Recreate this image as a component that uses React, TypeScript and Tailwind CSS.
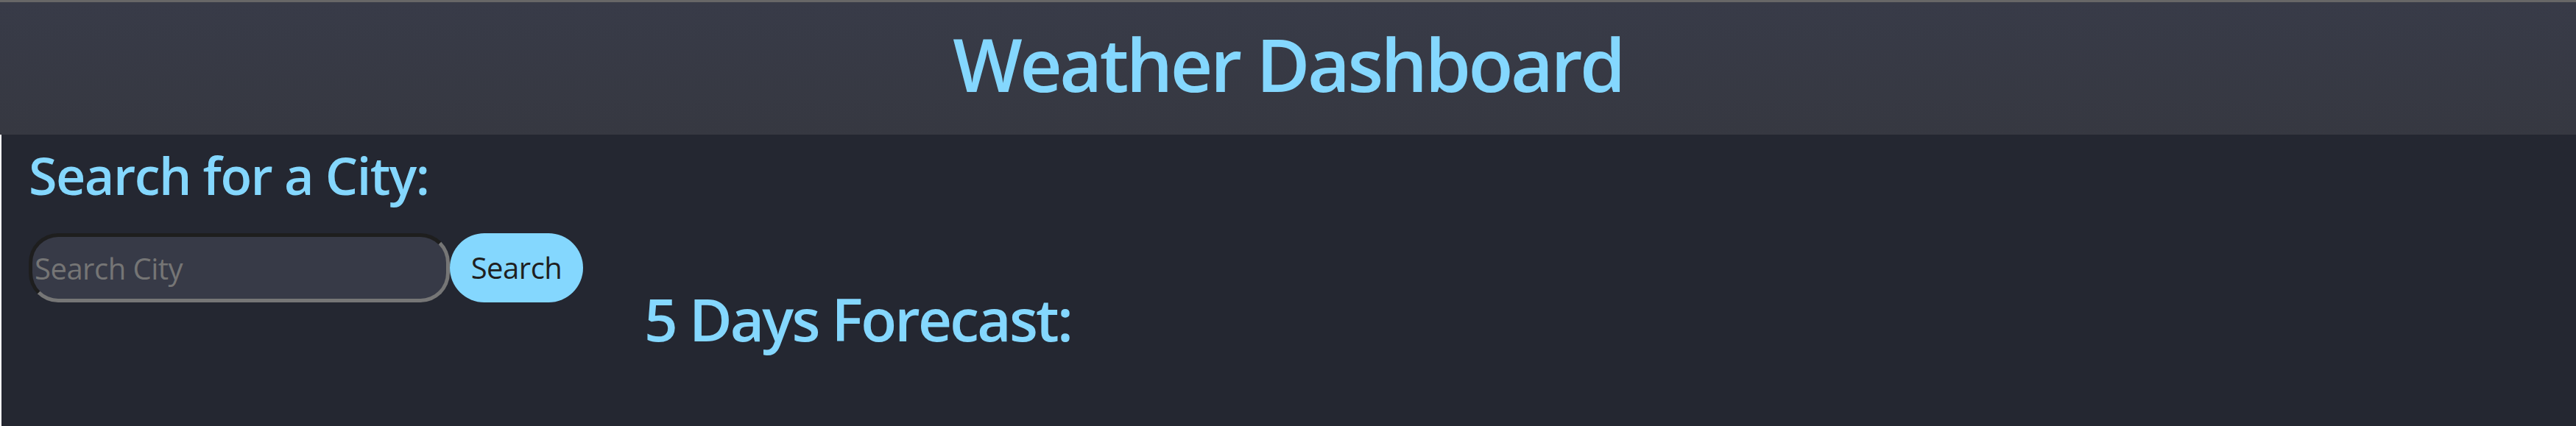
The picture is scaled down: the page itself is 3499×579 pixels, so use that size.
export default function App() {
  return (
    <div className="flex min-h-screen flex-col bg-[#242731] font-['Open_Sans',_'Noto_Sans',_sans-serif]">
      {/* Header */}
      <header className="h-[183px] border-t-[3px] border-[#676767] bg-gradient-to-b from-[#383b48] to-[#363841] pt-[33px] text-center">
        <h1 className="text-[100px] leading-none font-semibold tracking-[-3.5px] text-[#84d7fe]">Weather Dashboard</h1>
      </header>

      {/* Main */}
      <main className="flex flex-1 border-l-2 border-white pl-[37px]">
        <aside className="pt-[20px]">
          <h2 className="text-[70px] leading-none font-semibold tracking-[-1.5px] text-[#84d7fe]">Search for a City:</h2>
          <div className="mt-[44px] flex">
            <input
              type="text"
              placeholder="Search City"
              className="h-[94px] w-[572px] rounded-[40px] border-[5px] border-t-[#1e1e1e] border-l-[#1e1e1e] border-b-[#767676] border-r-[#767676] bg-[#373a47] px-[3px] text-[40px] tracking-[-0.5px] text-white outline-none placeholder:text-[#757575]"
            />
            <button className="h-[94px] w-[181px] rounded-full bg-[#84d7fe] text-[40px] tracking-[-0.5px] text-[#1f1f1f]">
              Search
            </button>
          </div>
        </aside>

        <section className="ml-[83px] pt-[210px]">
          <h2 className="text-[80px] leading-none font-semibold tracking-[-2.8px] text-[#84d7fe]">5 Days Forecast:</h2>
        </section>
      </main>
    </div>
  )
}
